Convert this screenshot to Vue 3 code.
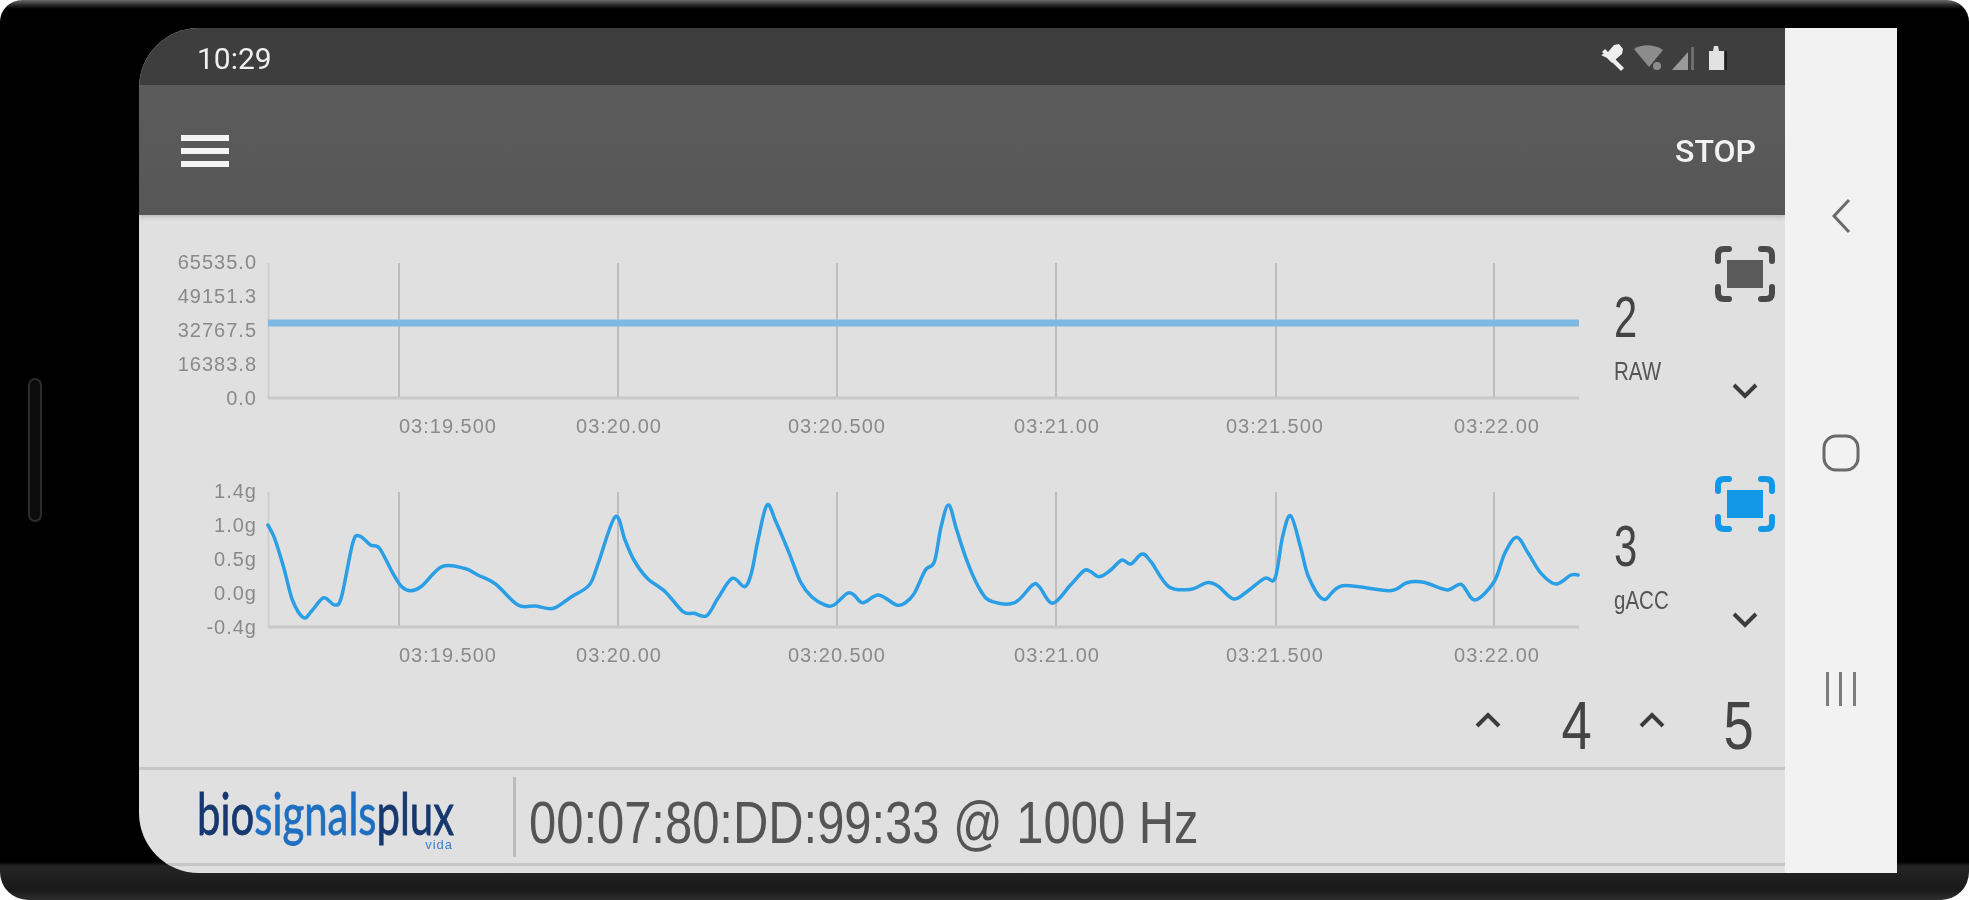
<script setup>
const rowTopB = 444
const zoomA = [[600,225],[615,265],[635,350],[655,450],[680,503],[700,480],[725,443],[750,465],[765,440],[790,280],[805,258],[830,285],[850,295],[880,370],[900,410],[920,422],[945,408],[990,350],[1040,355],[1070,375],[1110,402],[1160,465],[1200,468],[1240,475],[1280,440],[1320,405],[1340,340],[1378,200],[1400,270],[1420,330],[1450,385],[1490,425],[1530,485],[1555,490]]
const zoomB = [[15,497],[40,445],[72,385],[100,410],[115,370],[130,270],[150,165],[170,215],[200,310],[225,395],[250,440],[280,465],[300,465],[330,430],[345,435],[365,458],[400,435],[440,465],[460,458],[480,430],[505,360],[525,335],[540,230],[557,165],[575,240],[600,340],[630,425],[655,455],[705,458],[745,405],[760,410],[790,460],[830,405],[860,362],[875,365],[895,380],[920,360],[945,330],[965,342],[990,312],[1010,335],[1050,410],[1100,418],[1135,398],[1160,408],[1195,447],[1225,425],[1265,385],[1288,385],[1305,260],[1323,197],[1345,290]]
const zoomC = [[20,380],[55,448],[100,407],[210,422],[250,398],[290,397],[345,420],[378,403],[410,450],[455,395],[480,310],[508,262],[535,310],[565,370],[600,402],[635,375],[652,375]]

const local = (x, y) => [x - 139, y + 450 - rowTopB]
const pts = [
  ...zoomA.map(([x, y]) => local(x / 2.24, y / 3)),
  ...zoomB.map(([x, y]) => local(x / 2.24 + 700, y / 3)),
  ...zoomC.map(([x, y]) => local(x / 2.344 + 1300, y / 3)),
]
function smooth(p) {
  let d = `M${p[0][0].toFixed(1)} ${p[0][1].toFixed(1)}`
  for (let i = 0; i < p.length - 1; i++) {
    const a = p[Math.max(i - 1, 0)], b = p[i], c = p[i + 1], e = p[Math.min(i + 2, p.length - 1)]
    const t = 6
    d += `C${(b[0] + (c[0] - a[0]) / t).toFixed(1)} ${(b[1] + (c[1] - a[1]) / t).toFixed(1)} ${(c[0] - (e[0] - b[0]) / t).toFixed(1)} ${(c[1] - (e[1] - b[1]) / t).toFixed(1)} ${c[0].toFixed(1)} ${c[1].toFixed(1)}`
  }
  return d
}
const grid = [260, 479, 698, 917, 1137, 1355]
const xLabels = [
  { t: '03:19.500', x: 309 },
  { t: '03:20.00', x: 480 },
  { t: '03:20.500', x: 698 },
  { t: '03:21.00', x: 918 },
  { t: '03:21.500', x: 1136 },
  { t: '03:22.00', x: 1358 },
]
const yPos = [46, 80, 114, 148, 182]
const charts = [
  { id: 2, name: 'RAW', ticks: ['65535.0', '49151.3', '32767.5', '16383.8', '0.0'], active: false, line: 'M129 108H1440', cls: 'flat' },
  { id: 3, name: 'gACC', ticks: ['1.4g', '1.0g', '0.5g', '0.0g', '-0.4g'], active: true, line: smooth(pts), cls: 'wave' },
]
</script>

<template>
  <div class="phone">
    <div class="side-key"></div>
    <div class="screen">
      <div class="app">
        <div class="status">
          <span class="time">10:29</span>
          <svg class="status-icons" width="130" height="30" viewBox="0 0 130 30">
            <g fill="#eeeeee">
              <path d="M2 12l7-3 6-7 5-1 4 5-1 5-6 5 0 2-4 2-5-5z" />
              <path d="M6 6l19 19-3 3L3 9z" />
            </g>
            <g fill="#8c8c8c">
              <path d="M35 6c8-5 20-5 29 1l-14 17z" />
              <circle cx="58" cy="23" r="4" />
            </g>
            <g fill="#9a9a9a">
              <path d="M73 27l16-18v18z" />
              <rect x="92" y="4" width="3" height="23" fill="#6e6e6e" />
            </g>
            <path d="M110 8l4 0 1-5h4l1 5 4 0h1v19h-15z" fill="#e2e2e2" />
            <rect x="126" y="8" width="2" height="19" fill="#1f1f1f" />
          </svg>
        </div>
        <div class="toolbar">
          <svg class="burger" width="48" height="34" viewBox="0 0 48 34">
            <g fill="#f4f4f4">
              <rect x="0" y="0" width="48" height="6" />
              <rect x="0" y="13" width="48" height="6" />
              <rect x="0" y="26" width="48" height="6" />
            </g>
          </svg>
          <span class="stop">STOP</span>
        </div>
        <div class="main">
          <div v-for="c in charts" :key="c.id" class="row">
            <svg class="plot" width="1475" height="229" viewBox="0 0 1475 229">
              <line x1="129.5" y1="48" x2="129.5" y2="183" stroke="#cfcfcf" stroke-width="2" />
              <line v-for="g in grid" :key="g" :x1="g" y1="48" :x2="g" y2="183" stroke="#bdbdbd" stroke-width="2" />
              <line x1="129" y1="183" x2="1440" y2="183" stroke="#c8c8c8" stroke-width="3" />
              <path :d="c.line" :class="c.cls" fill="none" stroke-linejoin="round" />
              <text v-for="(t, i) in c.ticks" :key="t" class="axis" x="118" :y="yPos[i] + 8" text-anchor="end">{{ t }}</text>
              <text v-for="l in xLabels" :key="l.t" class="axis" :x="l.x" y="218" text-anchor="middle">{{ l.t }}</text>
            </svg>
            <div class="meta">
              <span class="num">{{ c.id }}</span>
              <span class="name">{{ c.name }}</span>
            </div>
            <div class="controls">
              <svg width="60" height="56" viewBox="0 0 60 56" :class="c.active ? 'on' : 'off'">
                <path class="corners" d="M3 15V9q0-6 6-6h5M46 3h5q6 0 6 6v6M57 41v6q0 6-6 6h-5M14 53H9q-6 0-6-6v-6" />
                <rect x="12" y="14" width="36" height="28" />
              </svg>
              <svg class="down" width="28" height="18" viewBox="0 0 28 18">
                <path d="M3 3l11 11L25 3" fill="none" stroke="#3c3c3c" stroke-width="4" />
              </svg>
            </div>
          </div>
          <div class="more">
            <svg class="up up-a" width="28" height="18" viewBox="0 0 28 18"><path d="M3 15L14 4l11 11" fill="none" stroke="#3c3c3c" stroke-width="4" /></svg>
            <span class="num big big-a">4</span>
            <svg class="up up-b" width="28" height="18" viewBox="0 0 28 18"><path d="M3 15L14 4l11 11" fill="none" stroke="#3c3c3c" stroke-width="4" /></svg>
            <span class="num big big-b">5</span>
          </div>
        </div>
        <div class="footer">
          <div class="foot-row">
            <div class="logo">
              <div class="logo-word"><span class="navy">bio</span><span class="blue">signals</span><span class="navy">plux</span></div>
              <div class="logo-sub">vida</div>
            </div>
            <div class="sep"></div>
            <div class="device">00:07:80:DD:99:33 @ 1000 Hz</div>
          </div>
        </div>
      </div>
      <div class="nav">
        <svg width="20" height="36" viewBox="0 0 20 36"><path d="M18 2L3 18l15 16" fill="none" stroke="#6a6a6a" stroke-width="3" /></svg>
        <svg width="38" height="38" viewBox="0 0 38 38"><rect x="2" y="2" width="34" height="34" rx="12" fill="none" stroke="#6a6a6a" stroke-width="3" /></svg>
        <svg width="34" height="36" viewBox="0 0 34 36">
          <g fill="#7c7c7c"><rect x="2" y="1" width="3" height="34" /><rect x="15" y="1" width="3" height="34" /><rect x="29" y="1" width="3" height="34" /></g>
        </svg>
      </div>
    </div>
  </div>
</template>

<style>
html, body { margin: 0; background: #ffffff; }
</style>

<style scoped>
.phone {
  width: 1969px;
  height: 900px;
  box-sizing: border-box;
  padding: 28px 72px 27px 139px;
  position: relative;
  border-radius: 22px 22px 28px 28px;
  background: linear-gradient(to bottom, #6a6a6a 0, #2a2a2a 5px, #000 9px, #000 862px, #242424 866px, #1a1a1a 890px, #2e2e2e 900px);
  font-family: "Liberation Sans", sans-serif;
  filter: blur(0.7px);
  overflow: hidden;
}
.side-key {
  position: absolute;
  left: 28px;
  top: 378px;
  width: 14px;
  height: 144px;
  box-sizing: border-box;
  border: 2px solid #2c2c2c;
  border-radius: 7px;
  background: #0c0c0c;
}
.screen {
  display: flex;
  height: 100%;
}
.app {
  width: 1646px;
  display: flex;
  flex-direction: column;
  border-radius: 60px 0 0 60px;
  overflow: hidden;
  background: #e0e0e0;
}
.status {
  height: 57px;
  flex: none;
  background: #3e3e3e;
  display: flex;
  align-items: center;
  justify-content: space-between;
  padding: 0 56px 0 58px;
}
.time {
  font-family: Roboto, sans-serif;
  font-size: 30px;
  color: #efefef;
  margin-top: 4px;
}
.status-icons { margin-top: 3px; }
.toolbar {
  height: 130px;
  flex: none;
  background: linear-gradient(to bottom, #5c5c5c, #565656);
  display: flex;
  align-items: center;
  justify-content: space-between;
  padding: 0 29px 0 42px;
  box-shadow: 0 2px 4px rgba(0, 0, 0, 0.18);
  box-sizing: border-box;
}
.burger { margin-top: 3px; }
.stop {
  font-family: Roboto, sans-serif;
  font-size: 32px;
  font-weight: 500;
  color: #f2f2f2;
  margin-top: 2px;
}
.main {
  flex: 1;
  display: flex;
  flex-direction: column;
}
.row {
  height: 229px;
  flex: none;
  display: flex;
}
.plot { flex: none; display: block; }
.axis {
  font-family: "Liberation Sans", sans-serif;
  font-size: 20px;
  letter-spacing: 1px;
  fill: #8a8a8a;
}
.flat { stroke: #7db9e4; stroke-width: 7; }
.wave { stroke: #2b9fe6; stroke-width: 3.5; stroke-linecap: round; }
.meta {
  width: 100px;
  flex: none;
  display: flex;
  flex-direction: column;
  align-items: flex-start;
  padding-top: 71px;
}
.num {
  display: inline-block;
  font-size: 58px;
  line-height: 62px;
  color: #444444;
  transform: scaleX(0.72);
  transform-origin: left center;
}
.name {
  display: inline-block;
  font-size: 25px;
  line-height: 30px;
  color: #555555;
  margin-top: 8px;
  transform: scaleX(0.82);
  transform-origin: left center;
}
.controls {
  width: 62px;
  flex: none;
  display: flex;
  flex-direction: column;
  align-items: center;
  padding-top: 31px;
}
.row:nth-child(2) .controls { padding-top: 32px; }
.down { margin-top: 80px; }
.row:nth-child(2) .down { margin-top: 79px; }
.corners { fill: none; stroke-width: 6; stroke-linecap: round; }
.off .corners { stroke: #4a4a4a; }
.off rect { fill: #5a5a5a; }
.on .corners { stroke: #1398e8; }
.on rect { fill: #1398e8; }
.more {
  flex: 1;
  display: flex;
  align-items: center;
  justify-content: flex-end;
  padding: 10px 31px 0 0;
  box-sizing: border-box;
}
.big {
  font-size: 68px;
  line-height: 84px;
  transform: scaleX(0.8);
  transform-origin: right center;
}
.up-a { margin-right: 52px; margin-top: -10px; }
.big-a { margin-right: 46px; }
.up-b { margin-right: 50px; margin-top: -10px; }
.footer {
  height: 106px;
  flex: none;
  box-sizing: border-box;
  border-top: 3px solid #c6c6c6;
  padding-bottom: 7px;
}
.foot-row {
  height: 100%;
  box-sizing: border-box;
  border-bottom: 3px solid #c6c6c6;
  display: flex;
  align-items: center;
}
.logo {
  width: 314px;
  box-sizing: border-box;
  margin-left: 58px;
  margin-right: 2px;
  flex: none;
  padding-top: 4px;
}
.logo-word {
  font-family: Lato, sans-serif;
  font-size: 59px;
  line-height: 52px;
  font-weight: 400;
  -webkit-text-stroke: 0.8px currentColor;
  white-space: nowrap;
  width: 256px;
  transform: scaleX(0.71);
  transform-origin: left center;
}
.navy { color: #16386f; }
.blue { color: #1f6fc0; }
.logo-sub {
  width: 256px;
  text-align: right;
  font-family: "Liberation Sans", sans-serif;
  font-size: 13px;
  line-height: 12px;
  letter-spacing: 1px;
  color: #3f7fc8;
}
.sep {
  width: 3px;
  height: 80px;
  flex: none;
  background: #bcbcbc;
}
.device {
  margin: 12px 0 0 13px;
  font-size: 60px;
  line-height: 70px;
  color: #555555;
  white-space: nowrap;
  transform: scaleX(0.815);
  transform-origin: left center;
}
.nav {
  width: 112px;
  flex: none;
  background: #f2f2f2;
  box-sizing: border-box;
  display: flex;
  flex-direction: column;
  align-items: center;
  padding: 170px 0 166px;
  justify-content: space-between;
}
</style>
